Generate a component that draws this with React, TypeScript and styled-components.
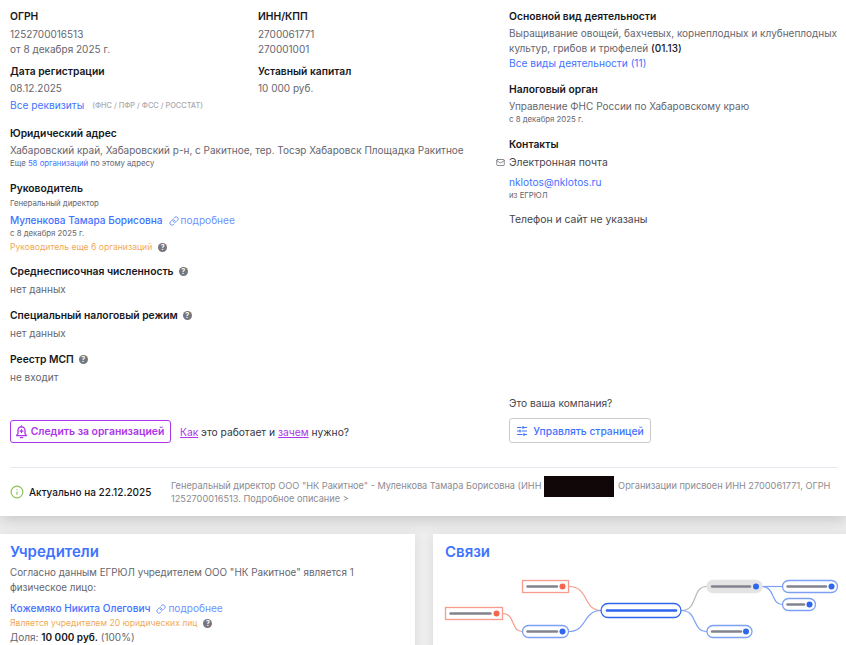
import styled, { createGlobalStyle } from 'styled-components';
import { Info, Link, Mail, SlidersHorizontal } from 'lucide-react';

const GlobalStyle = createGlobalStyle`
  html, body {
    margin: 0;
    padding: 0;
    background: #eeeeee;
  }
  body {
    font-family: Inter, "Noto Sans", sans-serif;
    color: #66666e;
  }
`;

const Page = styled.div`
  width: 846px;
  height: 645px;
  overflow: hidden;
`;

const TopCard = styled.section`
  background: #fff;
  height: 516px;
  padding: 0 8px 0 10px;
  box-sizing: border-box;
  box-shadow: 0 4px 14px rgba(60, 60, 70, 0.22);
  position: relative;
`;

const Columns = styled.div`
  display: grid;
  grid-template-columns: 499px 1fr;
  height: 468px;
  border-bottom: 1px solid #e8e8f0;
  box-sizing: border-box;
  padding-top: 9px;
`;

const LeftCol = styled.div`
  display: flex;
  flex-direction: column;
`;

const RightCol = styled.div`
  display: flex;
  flex-direction: column;
  position: relative;
`;

const Pair = styled.div`
  display: grid;
  grid-template-columns: 248px 1fr;
`;

const Label = styled.div<{ $top?: number }>`
  font-size: 10.3px;
  line-height: 14px;
  font-weight: 600;
  color: #16171d;
  margin-top: ${(p) => p.$top ?? 0}px;
  display: flex;
  align-items: center;
  gap: 5px;
`;

const Value = styled.div<{ $top?: number }>`
  font-size: 10px;
  line-height: 15px;
  color: #66666e;
  margin-top: ${(p) => p.$top ?? 0}px;
  white-space: nowrap;
`;

const Small = styled.div<{ $top?: number }>`
  font-size: 7.8px;
  line-height: 11px;
  color: #66666e;
  margin-top: ${(p) => p.$top ?? 0}px;
  white-space: nowrap;
`;

const Blue = styled.a`
  color: #3f73ff;
  text-decoration: none;
`;

const LinkRow = styled.div<{ $top?: number }>`
  font-size: 10.2px;
  line-height: 15px;
  color: #3f73ff;
  margin-top: ${(p) => p.$top ?? 0}px;
  display: flex;
  align-items: center;
  white-space: nowrap;
`;

const Name = styled.a`
  color: #3f73ff;
  font-weight: 500;
  font-size: 10.1px;
  text-decoration: none;
`;

const More = styled.span`
  color: #6f93ff;
  display: inline-flex;
  align-items: center;
  gap: 2px;
  margin-left: 6px;
  font-size: 10.1px;
`;

const Hint = styled.span`
  font-size: 7.4px;
  font-weight: 500;
  color: #a9a9b0;
  margin-left: 8px;
`;

const Orange = styled.div<{ $top?: number }>`
  font-size: 8.6px;
  line-height: 12px;
  color: #f0aa58;
  margin-top: ${(p) => p.$top ?? 0}px;
  display: flex;
  align-items: center;
  gap: 6px;
  white-space: nowrap;
`;

const Help = styled.span`
  width: 9px;
  height: 9px;
  border-radius: 50%;
  background: #76767e;
  color: #fff;
  font-size: 7px;
  line-height: 9px;
  font-weight: 700;
  text-align: center;
  display: inline-block;
  flex: none;
`;

const Strong = styled.b<{ $heavy?: boolean }>`
  color: #16171d;
  font-weight: ${(p) => (p.$heavy ? 600 : 500)};
`;

const Actions = styled.div`
  display: flex;
  align-items: center;
  gap: 9px;
  margin-top: 35px;
`;

const FollowButton = styled.button`
  height: 23px;
  width: 161px;
  border: 1px solid #ad35ea;
  border-radius: 3px;
  background: #fff;
  color: #ad35ea;
  font: 600 10.4px Inter, sans-serif;
  display: flex;
  align-items: center;
  justify-content: center;
  gap: 3px;
  padding: 0 2px 0 0;
`;

const HowText = styled.div`
  font-size: 10.25px;
  color: #34343c;
  white-space: nowrap;
`;

const Purple = styled.a`
  color: #ad35ea;
  text-decoration: underline;
`;

const Contact = styled.div<{ $top?: number }>`
  font-size: 10.4px;
  line-height: 15px;
  color: #45454d;
  margin-top: ${(p) => p.$top ?? 4}px;
  display: flex;
  align-items: center;
`;

const MailIcon = styled(Mail)`
  width: 9px;
  height: 9px;
  color: #66666e;
  margin-left: -13px;
  margin-right: 4px;
`;

const Owner = styled.div`
  margin-top: auto;
  padding-bottom: 24px;
`;

const OwnerLabel = styled.div`
  font-size: 10.2px;
  color: #45454d;
  line-height: 14px;
`;

const ManageButton = styled.button`
  margin-top: 8px;
  height: 25px;
  width: 142px;
  border: 1px solid #c9c9cf;
  border-radius: 3px;
  background: #fff;
  color: #3f73ff;
  font: 500 10.3px Inter, sans-serif;
  display: flex;
  align-items: center;
  justify-content: center;
  gap: 5px;
  padding: 0;
`;

const Footer = styled.div`
  display: flex;
  align-items: center;
  height: 48px;
`;

const Status = styled.div`
  display: flex;
  align-items: center;
  gap: 5px;
  width: 161px;
  flex: none;
  font-size: 10px;
  font-weight: 500;
  color: #16171d;
  white-space: nowrap;
`;

const Summary = styled.div`
  font-size: 9.2px;
  line-height: 13px;
  color: #8b8b93;
  white-space: nowrap;
`;

const Redacted = styled.span`
  display: inline-block;
  width: 70px;
  height: 21px;
  margin: -5px 2px;
  background: #120708;
  vertical-align: middle;
`;

const Bottom = styled.div`
  display: grid;
  grid-template-columns: 415px 1fr;
  gap: 18px;
  margin-top: 18px;
`;

const Card = styled.section`
  background: #fff;
  height: 140px;
  padding: 9px 12px 0 10px;
  box-sizing: border-box;
  box-shadow: 0 2px 10px rgba(60, 60, 70, 0.1);
`;

const Heading = styled.h2<{ $left?: number }>`
  margin: 0 0 0 ${(p) => p.$left ?? 0}px;
  font-size: 15px;
  line-height: 18px;
  font-weight: 600;
  color: #3f73ff;
`;

const Para = styled.p`
  margin: 4px 0 0;
  font-size: 9.85px;
  line-height: 15px;
  color: #66666e;
`;

const Diagram = styled.svg`
  display: block;
  width: 413px;
  height: 84px;
  margin: 0 0 0 -10px;
`;

const LinkIcon = styled(Link)`
  width: 10px;
  height: 10px;
  stroke-width: 2.4;
`;

function BellIcon() {
  return (
    <svg width="13" height="14" viewBox="0 0 13 14" fill="none" stroke="currentColor" strokeWidth="1.3" strokeLinecap="round" strokeLinejoin="round">
      <path d="M6.5 1.8 C4.3 1.8 3 3.4 3 5.6 V8.6 L1.6 10.6 H11.4 L10 8.6 V5.6 C10 3.4 8.7 1.8 6.5 1.8 Z" />
      <path d="M6.5 1 V1.8 M5.3 12.6 H7.7 M6.5 4.6 V7.6 M5 6.1 H8" />
    </svg>
  );
}

type NodeProps = { x: number; y: number; w: number; barEnd: number; variant: 'red' | 'blue' | 'grey' };

function MapNode({ x, y, w, barEnd, variant }: NodeProps) {
  const red = variant === 'red';
  const stroke = red ? '#f79c8c' : variant === 'grey' ? '#e4e4e4' : '#7ba0f5';
  const fill = variant === 'grey' ? '#e4e4e4' : '#fff';
  return (
    <g>
      <rect x={x} y={y - 6} width={w} height={12} rx={red ? 0 : 6} fill={fill} stroke={stroke} strokeWidth={1.3} />
      <line x1={x + 5} x2={barEnd} y1={y} y2={y} stroke="#83838f" strokeWidth={2.4} strokeLinecap="round" />
      <circle cx={x + w - 6} cy={y} r={3} fill={red ? '#f4674e' : '#2f66ee'} />
    </g>
  );
}

function LinksMap() {
  // coordinates relative to the card's left edge (433) and the top of the drawing (561)
  return (
    <Diagram viewBox="0 0 413 84">
      <g fill="none" strokeWidth={1.2}>
        <path d="M136 25.5 C156 25.5 150 49.5 168 49.5" stroke="#f79c8c" />
        <path d="M70 52.5 C82 52.5 78 70.5 89 70.5" stroke="#f79c8c" />
        <path d="M136 70.5 C154 70.5 150 49.5 168 49.5" stroke="#7ba0f5" />
        <path d="M248 49.5 C266 49.5 258 25.5 274 25.5" stroke="#b5b5ba" />
        <path d="M248 49.5 C266 49.5 258 70.5 274 70.5" stroke="#7ba0f5" />
        <path d="M329 25.5 L349 25.5" stroke="#7ba0f5" />
        <path d="M329 25.5 C342 25.5 338 43.5 349 43.5" stroke="#7ba0f5" />
      </g>
      <MapNode x={89.5} y={25.5} w={46} barEnd={124} variant="red" />
      <MapNode x={12.5} y={52.5} w={57} barEnd={57.5} variant="red" />
      <MapNode x={89.5} y={70.5} w={46} barEnd={124} variant="blue" />
      <rect x={168} y={42.5} width={80} height={14} rx={7} fill="#fff" stroke="#2f66ee" strokeWidth={1.3} />
      <line x1={174} x2={243} y1={49.5} y2={49.5} stroke="#2f66ee" strokeWidth={2.6} strokeLinecap="round" />
      <MapNode x={274} y={25.5} w={55} barEnd={317} variant="grey" />
      <MapNode x={349.5} y={25.5} w={55} barEnd={393} variant="blue" />
      <MapNode x={349.5} y={43.5} w={33} barEnd={371} variant="blue" />
      <MapNode x={274} y={70.5} w={45} barEnd={308} variant="blue" />
    </Diagram>
  );
}

export default function App() {
  return (
    <Page>
      <GlobalStyle />
      <TopCard>
        <Columns>
          <LeftCol>
            <Pair>
              <div>
                <Label>ОГРН</Label>
                <Value $top={4}>1252700016513</Value>
                <Value>от 8 декабря 2025 г.</Value>
                <Label $top={7}>Дата регистрации</Label>
                <Value $top={3}>08.12.2025</Value>
              </div>
              <div>
                <Label>ИНН/КПП</Label>
                <Value $top={4}>2700061771</Value>
                <Value>270001001</Value>
                <Label $top={7}>Уставный капитал</Label>
                <Value $top={3}>10 000 руб.</Value>
              </div>
            </Pair>
            <LinkRow $top={2}>
              Все реквизиты<Hint>(ФНС / ПФР / ФСС / РОССТАТ)</Hint>
            </LinkRow>
            <Label $top={13}>Юридический адрес</Label>
            <Value $top={3}>Хабаровский край, Хабаровский р-н, с Ракитное, тер. Тосэр Хабаровск Площадка Ракитное</Value>
            <Small>
              Еще <Blue href="#">58 организаций</Blue> по этому адресу
            </Small>
            <Label $top={12}>Руководитель</Label>
            <Small $top={3}>Генеральный директор</Small>
            <LinkRow $top={4}>
              <Name href="#">Муленкова Тамара Борисовна</Name>
              <More>
                <LinkIcon />
                подробнее
              </More>
            </LinkRow>
            <Small>с 8 декабря 2025 г.</Small>
            <Orange $top={2}>
              Руководитель еще 6 организаций <Help>?</Help>
            </Orange>
            <Label $top={11}>
              Среднесписочная численность <Help>?</Help>
            </Label>
            <Value $top={4}>нет данных</Value>
            <Label $top={11}>
              Специальный налоговый режим <Help>?</Help>
            </Label>
            <Value $top={4}>нет данных</Value>
            <Label $top={11}>
              Реестр МСП <Help>?</Help>
            </Label>
            <Value $top={4}>не входит</Value>
            <Actions>
              <FollowButton>
                <BellIcon />
                Следить за организацией
              </FollowButton>
              <HowText>
                <Purple href="#">Как</Purple> это работает и <Purple href="#">зачем</Purple> нужно?
              </HowText>
            </Actions>
          </LeftCol>
          <RightCol>
            <Label>Основной вид деятельности</Label>
            <Value $top={3}>Выращивание овощей, бахчевых, корнеплодных и клубнеплодных</Value>
            <Value>
              культур, грибов и трюфелей <Strong>(01.13)</Strong>
            </Value>
            <LinkRow>Все виды деятельности (11)</LinkRow>
            <Label $top={11}>Налоговый орган</Label>
            <Value $top={3}>Управление ФНС России по Хабаровскому краю</Value>
            <Small>с 8 декабря 2025 г.</Small>
            <Label $top={12}>Контакты</Label>
            <Contact>
              <MailIcon />
              Электронная почта
            </Contact>
            <LinkRow $top={5}>nklotos@nklotos.ru</LinkRow>
            <Small>из ЕГРЮЛ</Small>
            <Contact $top={11}>Телефон и сайт не указаны</Contact>
            <Owner>
              <OwnerLabel>Это ваша компания?</OwnerLabel>
              <ManageButton>
                <SlidersHorizontal size={12} strokeWidth={2.4} />
                Управлять страницей
              </ManageButton>
            </Owner>
          </RightCol>
        </Columns>
        <Footer>
          <Status>
            <Info size={14} color="#8cc152" />
            Актуально на 22.12.2025
          </Status>
          <Summary>
            Генеральный директор ООО "НК Ракитное" - Муленкова Тамара Борисовна (ИНН<Redacted /> Организации присвоен ИНН 2700061771, ОГРН
            <br />
            1252700016513. Подробное описание &gt;
          </Summary>
        </Footer>
      </TopCard>
      <Bottom>
        <Card>
          <Heading>Учредители</Heading>
          <Para>
            Согласно данным ЕГРЮЛ учредителем ООО "НК Ракитное" является 1 физическое лицо:
          </Para>
          <LinkRow $top={6}>
            <Name href="#">Кожемяко Никита Олегович</Name>
            <More>
              <LinkIcon />
              подробнее
            </More>
          </LinkRow>
          <Orange $top={1}>
            Является учредителем 20 юридических лиц <Help>?</Help>
          </Orange>
          <Value $top={1}>
            Доля: <Strong $heavy>10 000 руб.</Strong> (100%)
          </Value>
        </Card>
        <Card>
          <Heading $left={2}>Связи</Heading>
          <LinksMap />
        </Card>
      </Bottom>
    </Page>
  );
}
